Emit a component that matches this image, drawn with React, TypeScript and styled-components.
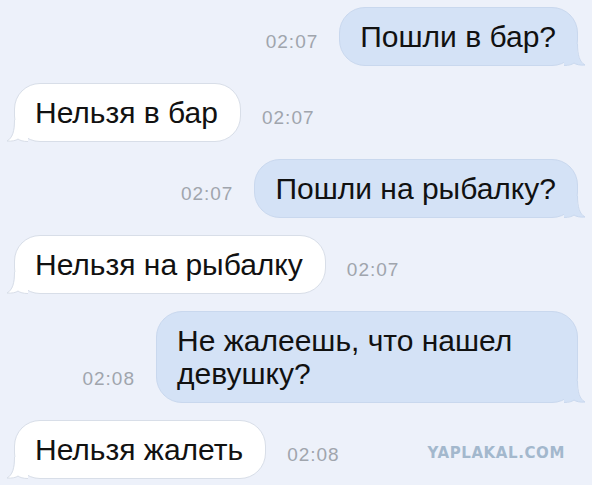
import React from 'react';
import styled, { createGlobalStyle } from 'styled-components';

type Side = 'out' | 'in';

interface Message {
  side: Side;
  text: string;
  time: string;
}

const messages: Message[] = [
  { side: 'out', text: 'Пошли в бар?', time: '02:07' },
  { side: 'in', text: 'Нельзя в бар', time: '02:07' },
  { side: 'out', text: 'Пошли на рыбалку?', time: '02:07' },
  { side: 'in', text: 'Нельзя на рыбалку', time: '02:07' },
  { side: 'out', text: 'Не жалеешь, что нашел девушку?', time: '02:08' },
  { side: 'in', text: 'Нельзя жалеть', time: '02:08' },
];

const colors = {
  page: '#edf1fa',
  out: '#d4e2f6',
  outBorder: '#c9d8ee',
  in: '#ffffff',
  inBorder: '#d8dee8',
};

const GlobalStyle = createGlobalStyle`
  html, body {
    margin: 0;
    padding: 0;
    background: ${colors.page};
  }
  body {
    font-family: "Liberation Sans", Arial, sans-serif;
    width: 592px;
    height: 485px;
    overflow: hidden;
  }
`;

// хвостик пузыря (нарисован для исходящего, для входящего зеркалится)
const Tail: React.FC<{ side: Side }> = ({ side }) => {
  const fill = side === 'out' ? colors.out : colors.in;
  const stroke = side === 'out' ? colors.outBorder : colors.inBorder;
  return (
    <TailSvg side={side} width="22" height="22" viewBox="0 0 22 22">
      <path d="M0 0 H13 C13 11 15 18 21 21 C16 21.5 12 20.5 10 19 C8 20.5 5 21 0 21 Z" fill={fill} />
      <path
        d="M13.5 0 C13.5 11 15.5 18 21 21 C16 21.5 12 20.5 10 19 C8 20.5 5 21.5 0 21.5"
        fill="none"
        stroke={stroke}
        strokeWidth="1"
      />
    </TailSvg>
  );
};

const App: React.FC = () => {
  return (
    <>
      <GlobalStyle />
      <Chat>
        {messages.map((m, i) => (
          <Row key={i} side={m.side}>
            <Bubble side={m.side}>
              {m.text}
              <Tail side={m.side} />
            </Bubble>
            <Time>{m.time}</Time>
          </Row>
        ))}
        <Watermark>YAPLAKAL.COM</Watermark>
      </Chat>
    </>
  );
};

const Chat = styled.div`
  position: relative;
  box-sizing: border-box;
  width: 592px;
  height: 485px;
  padding: 7px 14px 0 14px;
  display: flex;
  flex-direction: column;
  gap: 17px;
  background: ${colors.page};
`;

const Row = styled.div<{ side: Side }>`
  display: flex;
  flex-direction: ${(p) => (p.side === 'out' ? 'row-reverse' : 'row')};
  justify-content: flex-start;
  align-items: flex-end;
  gap: 21px;
`;

const Bubble = styled.div<{ side: Side }>`
  position: relative;
  box-sizing: border-box;
  max-width: 422px;
  padding: 12px ${(p) => (p.side === 'out' ? '21px' : '22px')} 12px 20px;
  border-radius: 26px;
  background: ${(p) => (p.side === 'out' ? colors.out : colors.in)};
  border: 1px solid ${(p) => (p.side === 'out' ? colors.outBorder : colors.inBorder)};
  color: #111111;
  font-size: 30px;
  line-height: 33px;
`;

const TailSvg = styled.svg<{ side: Side }>`
  position: absolute;
  bottom: -1px;
  ${(p) => (p.side === 'out' ? 'right: -9px;' : 'left: -9px; transform: scaleX(-1);')}
  display: block;
`;

const Time = styled.span`
  font-size: 19px;
  line-height: 19px;
  letter-spacing: 1px;
  color: #a0a5ad;
  margin-bottom: 15px;
  white-space: nowrap;
`;

const Watermark = styled.div`
  position: absolute;
  right: 27px;
  top: 444px;
  font-family: "DejaVu Sans", sans-serif;
  font-weight: 900;
  font-size: 15px;
  letter-spacing: 0.6px;
  color: #a3b8cd;
`;

export default App;
